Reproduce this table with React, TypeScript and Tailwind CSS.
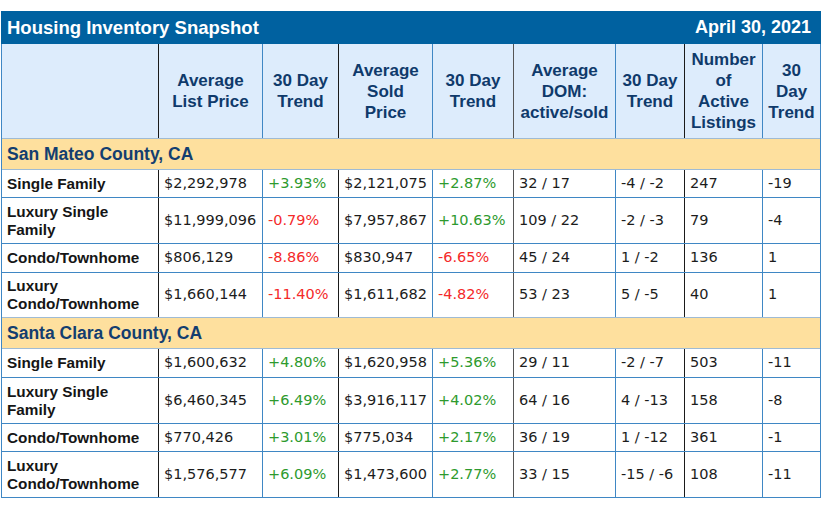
import React from "react";

const cols = "grid grid-cols-[156px_104px_76px_94px_81px_102px_69px_78px_58px]";
const dividers = [
  "",
  "border-l border-l-[#1a1a1a]",
  "border-l border-l-[#3f87c4]",
  "border-l border-l-[#1a1a1a]",
  "border-l border-l-[#3f87c4]",
  "border-l border-l-[#555555]",
  "border-l border-l-[#3f87c4]",
  "border-l border-l-[#1a1a1a]",
  "border-l border-l-[#3f87c4]",
];

type Row = { label: string; h: string; vals: string[] };

const sections: { name: string; rows: Row[] }[] = [
  {
    name: "San Mateo County, CA",
    rows: [
      { label: "Single Family", h: "h-[28px]", vals: ["$2,292,978", "+3.93%", "$2,121,075", "+2.87%", "32 / 17", "-4 / -2", "247", "-19"] },
      { label: "Luxury Single Family", h: "h-[46px]", vals: ["$11,999,096", "-0.79%", "$7,957,867", "+10.63%", "109 / 22", "-2 / -3", "79", "-4"] },
      { label: "Condo/Townhome", h: "h-[29px]", vals: ["$806,129", "-8.86%", "$830,947", "-6.65%", "45 / 24", "1 / -2", "136", "1"] },
      { label: "Luxury Condo/Townhome", h: "h-[45px]", vals: ["$1,660,144", "-11.40%", "$1,611,682", "-4.82%", "53 / 23", "5 / -5", "40", "1"] },
    ],
  },
  {
    name: "Santa Clara County, CA",
    rows: [
      { label: "Single Family", h: "h-[29px]", vals: ["$1,600,632", "+4.80%", "$1,620,958", "+5.36%", "29 / 11", "-2 / -7", "503", "-11"] },
      { label: "Luxury Single Family", h: "h-[46px]", vals: ["$6,460,345", "+6.49%", "$3,916,117", "+4.02%", "64 / 16", "4 / -13", "158", "-8"] },
      { label: "Condo/Townhome", h: "h-[28px]", vals: ["$770,426", "+3.01%", "$775,034", "+2.17%", "36 / 19", "1 / -12", "361", "-1"] },
      { label: "Luxury Condo/Townhome", h: "h-[46px]", vals: ["$1,576,577", "+6.09%", "$1,473,600", "+2.77%", "33 / 15", "-15 / -6", "108", "-11"] },
    ],
  },
];

const headers: string[][] = [
  [],
  ["Average", "List Price"],
  ["30 Day", "Trend"],
  ["Average", "Sold", "Price"],
  ["30 Day", "Trend"],
  ["Average", "DOM:", "active/sold"],
  ["30 Day", "Trend"],
  ["Number", "of", "Active", "Listings"],
  ["30", "Day", "Trend"],
];

function valueColor(i: number, v: string) {
  if (i === 1 || i === 3) {
    return v.startsWith("-") ? "text-[#f42a2a]" : "text-[#2e9a2e]";
  }
  return "text-[#1c1c1c]";
}

export default function App() {
  return (
    <div className="w-[825px] h-[510px] bg-white pt-[11px] pl-[1px]">
      <div className="w-[820px] font-['Liberation_Sans',Arial,sans-serif]">
        <div className="h-[33px] bg-[#0061a0] flex items-center justify-between pl-[6px] pr-[10px] text-white font-bold text-[18.5px]">
          <span>Housing Inventory Snapshot</span>
          <span className="text-[18px]">April 30, 2021</span>
        </div>
        <div className="border-l border-r border-b border-[#3f87c4]">
          <div className={`${cols} h-[94px] bg-[#ddecfc]`}>
            {headers.map((lines, i) => (
              <div
                key={i}
                className={`${dividers[i]} flex flex-col items-center justify-center text-center text-[17px] leading-[21px] font-bold text-[#0f3a6b] whitespace-nowrap`}
              >
                {lines.map((l, j) => (
                  <span key={j}>{l}</span>
                ))}
              </div>
            ))}
          </div>
          {sections.map((s) => (
            <React.Fragment key={s.name}>
              <div className="h-[31px] border-t border-t-[#9fbbd4] bg-[#fee09e] flex items-center pl-[5px] text-[17.5px] font-bold text-[#133e70]">
                {s.name}
              </div>
              {s.rows.map((r, ri) => (
                <div
                  key={r.label + ri}
                  className={`${cols} ${r.h} border-t ${ri === 0 ? "border-t-[#9fbbd4]" : "border-t-[#3f87c4]"}`}
                >
                  <div className="flex items-center pl-[5px] pr-[4px] text-[15.3px] leading-[18px] font-bold text-[#151515]">
                    <span>{r.label}</span>
                  </div>
                  {r.vals.map((v, i) => (
                    <div
                      key={i}
                      className={`${dividers[i + 1]} flex items-center pl-[5px] whitespace-nowrap font-['DejaVu_Sans',Verdana,sans-serif] text-[14.5px] ${valueColor(i, v)}`}
                    >
                      {v}
                    </div>
                  ))}
                </div>
              ))}
            </React.Fragment>
          ))}
        </div>
      </div>
    </div>
  );
}
